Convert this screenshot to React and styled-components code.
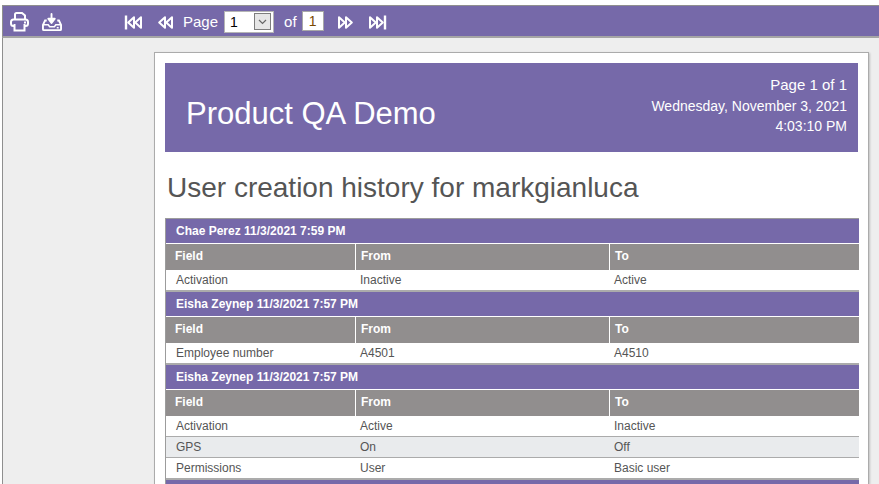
import React from "react";
import styled, { createGlobalStyle } from "styled-components";

const GlobalStyle = createGlobalStyle`
  html, body {
    margin: 0;
    height: 100%;
    overflow: hidden;
    background: #fff;
    font-family: "Liberation Sans", Arial, sans-serif;
  }
`;

const groups = [
  {
    title: "Chae Perez 11/3/2021 7:59 PM",
    rows: [["Activation", "Inactive", "Active"]]
  },
  {
    title: "Eisha Zeynep 11/3/2021 7:57 PM",
    rows: [["Employee number", "A4501", "A4510"]]
  },
  {
    title: "Eisha Zeynep 11/3/2021 7:57 PM",
    rows: [
      ["Activation", "Active", "Inactive"],
      ["GPS", "On", "Off"],
      ["Permissions", "User", "Basic user"]
    ]
  }
];

const Svg = ({ w, h, children }) => (
  <svg width={w} height={h} viewBox={`0 0 ${w} ${h}`} fill="none" stroke="#fff" strokeWidth="2">
    {children}
  </svg>
);

const PrintIcon = () => (
  <Svg w={20} h={20}>
    <path d="M5 8V2.5A1.5 1.5 0 0 1 6.500 1h5.500l3 2.500V8" />
    <rect x="1" y="7.500" width="17" height="6.500" rx="2.500" />
    <path d="M4.500 12v6.500h10V12" fill="#7669a9" />
    <path d="M14 10.500h2" />
  </Svg>
);

const SaveIcon = () => (
  <Svg w={21} h={20}>
    <path d="M10 1.500v5h3.400L10 11 6.600 6.500H10z" fill="#fff" strokeLinejoin="round" />
    <path d="M5 8.500H3.200L1 13v4.500a1 1 0 0 0 1 1h17a1 1 0 0 0 1-1V13l-2.200-4.500H16" />
    <path d="M1 13h5.500l1.500 2h5l1.500-2H20" strokeWidth="1.600" />
    <path d="M15.500 16h2" strokeWidth="1.600" />
  </Svg>
);

const Nav = ({ last, flip }) => (
  <NavButton $flip={flip}>
    <Svg w={19} h={15}>
      {last && <path d="M2 0.500v14" strokeWidth="2.400" />}
      <path d="M10 2.200 4.200 7.500l5.800 5.300z" strokeLinejoin="round" />
      <path d="M17 2.200 11.200 7.500l5.800 5.300z" strokeLinejoin="round" />
    </Svg>
  </NavButton>
);

export default function App() {
  return (
    <Viewer>
      <GlobalStyle />
      <Toolbar>
        <ToolGroup>
          <ToolButton><PrintIcon /></ToolButton>
          <ToolButton><SaveIcon /></ToolButton>
        </ToolGroup>
        <Pager>
          <Nav last />
          <Nav />
          <PagerLabel>Page</PagerLabel>
          <PageSelect>
            <span>1</span>
            <SelectArrow>
              <svg width="9" height="6" viewBox="0 0 9 6" fill="none" stroke="#666" strokeWidth="1.2">
                <path d="M1 1l3.500 3.500L8 1" />
              </svg>
            </SelectArrow>
          </PageSelect>
          <OfLabel>of</OfLabel>
          <PageCount>1</PageCount>
          <Nav flip />
          <Nav last flip />
        </Pager>
      </Toolbar>
      <Content>
        <Sheet>
          <Banner>
            <BannerTitle>Product QA Demo</BannerTitle>
            <BannerMeta>
              <PageInfo>Page 1 of 1</PageInfo>
              <DateInfo>Wednesday, November 3, 2021</DateInfo>
              <DateInfo>4:03:10 PM</DateInfo>
            </BannerMeta>
          </Banner>
          <Heading>User creation history for markgianluca</Heading>
          <Table>
            <colgroup>
              <col style={{ width: 189 }} />
              <col style={{ width: 254 }} />
              <col />
            </colgroup>
            {groups.map((group, i) => (
              <Group key={i}>
                <tr>
                  <GroupCell colSpan={3}>{group.title}</GroupCell>
                </tr>
                <tr>
                  <HeadCell>Field</HeadCell>
                  <HeadCell>From</HeadCell>
                  <HeadCell>To</HeadCell>
                </tr>
                {group.rows.map((row, j) => (
                  <tr key={j}>
                    {row.map((value, k) => (
                      <DataCell key={k} $alt={j % 2 === 1}>{value}</DataCell>
                    ))}
                  </tr>
                ))}
              </Group>
            ))}
            <Group>
              <tr>
                <GroupCell colSpan={3}>&nbsp;</GroupCell>
              </tr>
            </Group>
          </Table>
        </Sheet>
      </Content>
    </Viewer>
  );
}

const Viewer = styled.div`
  height: 484px;
  overflow: hidden;
  padding-top: 5px;
  box-sizing: border-box;
`;

const Toolbar = styled.div`
  display: flex;
  align-items: center;
  height: 33px;
  box-sizing: border-box;
  margin-left: 2px;
  background: #7669a9;
  border-top: 1px solid #8f8f8f;
  border-left: 1px solid #8f8f8f;
  border-bottom: 2px solid #a5a5a5;
`;

const ToolGroup = styled.div`
  display: flex;
  align-items: center;
  gap: 12px;
  margin-left: 7px;
  padding-top: 2px;
`;

const ToolButton = styled.div`
  display: flex;
  width: 20px;
  height: 20px;
`;

const Pager = styled.div`
  display: flex;
  align-items: center;
  margin-left: 62px;
  color: #fff;
  font-size: 15px;
`;

const NavButton = styled.div`
  display: flex;
  margin-right: 12px;
  padding-top: 2px;
  transform: ${p => (p.$flip ? "scaleX(-1)" : "none")};
`;

const PagerLabel = styled.span`
  margin-right: 6px;
  margin-left: -3px;
`;

const OfLabel = styled.span`
  margin: 0 5px 0 10px;
`;

const PageSelect = styled.div`
  display: flex;
  align-items: center;
  justify-content: space-between;
  width: 50px;
  height: 22px;
  margin-top: 1px;
  box-sizing: border-box;
  padding: 1px 2px 1px 5px;
  background: #fff;
  border: 1px solid #b5b5b5;
  color: #000;
  font-size: 14px;
`;

const SelectArrow = styled.div`
  display: flex;
  align-items: center;
  justify-content: center;
  width: 17px;
  height: 17px;
  box-sizing: border-box;
  background: #e6e6e6;
  border: 1px solid #7d7d7d;
`;

const PageCount = styled.div`
  width: 22px;
  height: 20px;
  margin-right: 13px;
  box-sizing: border-box;
  background: #fff;
  border: 1px solid #a8a8a8;
  color: #7a4a00;
  font-size: 14px;
  line-height: 18px;
  text-align: center;
`;

const Content = styled.div`
  height: 446px;
  margin-left: 2px;
  padding: 14px 10px 0 151px;
  background: #eeeeee;
  border-left: 1px solid #8f8f8f;
  box-sizing: border-box;
`;

const Sheet = styled.div`
  height: 100%;
  box-sizing: border-box;
  padding: 10px 10px 0;
  background: #fff;
  border: 1px solid #ababab;
  border-bottom: 0;
  box-shadow: 1px 1px 2px rgba(0, 0, 0, 0.2);
  overflow: hidden;
`;

const Banner = styled.div`
  display: flex;
  align-items: center;
  justify-content: space-between;
  height: 89px;
  padding: 0 11px 0 21px;
  background: #7669a9;
  color: #fff;
`;

const BannerTitle = styled.div`
  font-size: 31px;
  margin-top: 12px;
`;

const BannerMeta = styled.div`
  text-align: right;
  margin-top: -5px;
`;

const PageInfo = styled.div`
  font-size: 15px;
  line-height: 19px;
  padding-bottom: 2px;
`;

const DateInfo = styled.div`
  font-size: 14px;
  line-height: 20px;
`;

const Heading = styled.h1`
  margin: 18px 0 13px 2px;
  font-size: 28px;
  font-weight: normal;
  line-height: 35px;
  color: #555555;
`;

const Table = styled.table`
  width: 694px;
  table-layout: fixed;
  border-collapse: separate;
  border-spacing: 0;
  border-top: 1px solid #9c9c9c;
  border-left: 1px solid #9c9c9c;
  font-size: 12px;
`;

const Group = styled.tbody`
  tr:last-child td {
    height: 22px;
    border-bottom-width: 2px;
    padding-bottom: 1px;
  }
`;

const GroupCell = styled.td`
  height: 25px;
  padding: 0 0 0 10px;
  box-sizing: border-box;
  background: #7669a9;
  border-bottom: 1px solid #fff;
  color: #fff;
  font-weight: bold;
`;

const HeadCell = styled.td`
  height: 26px;
  padding: 0 0 2px 9px;
  box-sizing: border-box;
  background: #918e8e;
  border-left: 1px solid #fff;
  color: #fff;
  font-weight: bold;
  &:first-child {
    border-left: 0;
  }
  & + & {
    padding-left: 5px;
  }
`;

const DataCell = styled.td`
  height: 21px;
  padding: 0 0 0 10px;
  box-sizing: border-box;
  background: ${p => (p.$alt ? "#e9ebed" : "#fff")};
  border-bottom: 1px solid #ababab;
  color: #555555;
  & + & {
    padding-left: 5px;
  }
`;
